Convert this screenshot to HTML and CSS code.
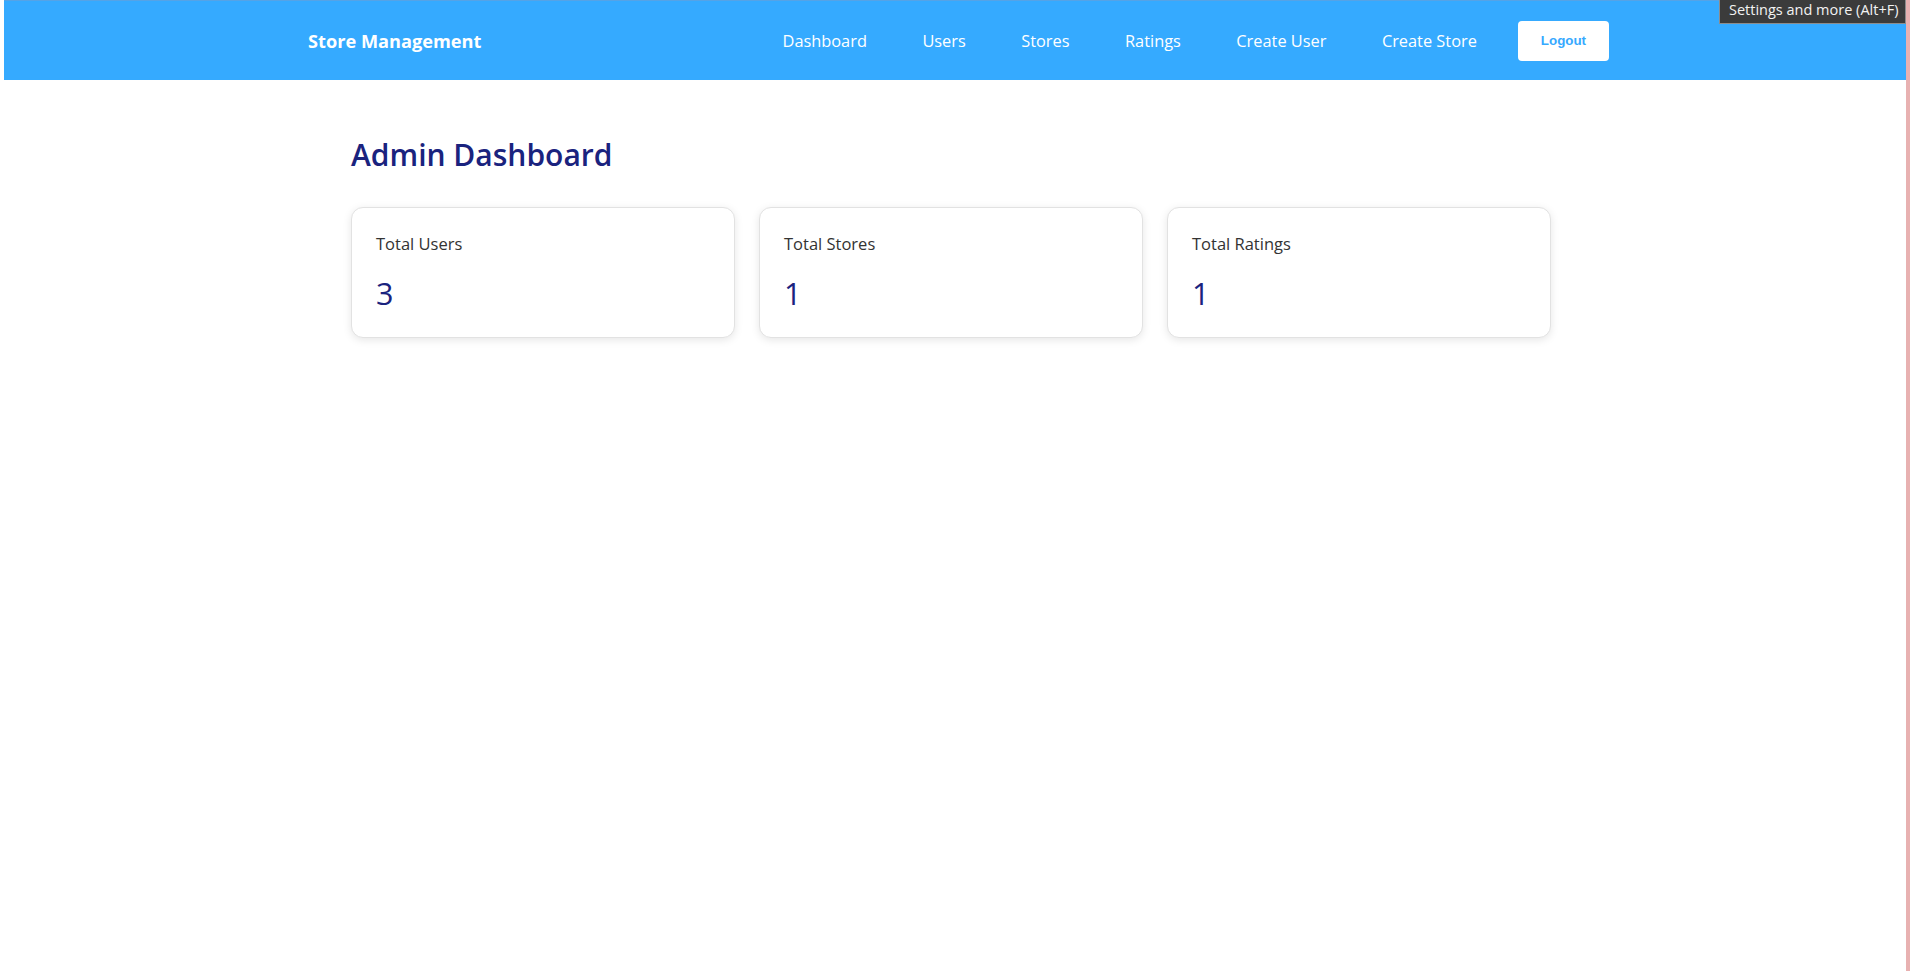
FILE: index.html
```html
<!DOCTYPE html>
<html lang="en">
<head>
<meta charset="utf-8">
<title>Store Management</title>
<link rel="stylesheet" href="styles.css">
</head>
<body>
<div class="app">
  <header class="navbar">
    <div class="brand">Store Management</div>
    <nav class="nav">
      <div class="nav-links">
        <a class="nav-link" href="#">Dashboard</a>
        <a class="nav-link" href="#">Users</a>
        <a class="nav-link" href="#">Stores</a>
        <a class="nav-link" href="#">Ratings</a>
        <a class="nav-link" href="#">Create User</a>
        <a class="nav-link" href="#">Create Store</a>
      </div>
      <button class="logout" type="button">Logout</button>
    </nav>
  </header>
  <main class="main">
    <h1 class="page-title">Admin Dashboard</h1>
    <section class="stats">
      <div class="stat-card">
        <h3 class="stat-label">Total Users</h3>
        <p class="stat-value">3</p>
      </div>
      <div class="stat-card">
        <h3 class="stat-label">Total Stores</h3>
        <p class="stat-value">1</p>
      </div>
      <div class="stat-card">
        <h3 class="stat-label">Total Ratings</h3>
        <p class="stat-value">1</p>
      </div>
    </section>
  </main>
  <div class="tooltip">Settings and more (Alt+F)</div>
</div>
</body>
</html>
```

FILE: styles.css
```css
* {
  box-sizing: border-box;
}

html, body {
  margin: 0;
  padding: 0;
  background: #ffffff;
  overflow: hidden;
}

body {
  font-family: "Open Sans", "Noto Sans", "DejaVu Sans", sans-serif;
}

.app {
  position: relative;
  margin-left: 4px;
  height: 100vh;
  border-right: 4px solid #e8b1b1;
  background: #ffffff;
}

.navbar {
  height: 80px;
  background: #35aaff;
  border-top: 1px solid #55a3e6;
  display: flex;
  align-items: center;
  justify-content: space-between;
  padding: 0 297px 0 304px;
}

.brand {
  color: #ffffff;
  font-weight: 700;
  font-size: 18.2px;
  line-height: 24px;
}

.nav {
  display: flex;
  align-items: center;
  gap: 41px;
}

.nav-links {
  display: flex;
  align-items: center;
  gap: 55.5px;
}

.nav-link {
  color: #ffffff;
  text-decoration: none;
  font-size: 16.35px;
  line-height: 24px;
}

.logout {
  background: #ffffff;
  color: #36a9ff;
  border: none;
  border-radius: 4px;
  font-family: "Liberation Sans", Arial, sans-serif;
  font-weight: 700;
  font-size: 13.33px;
  line-height: 16px;
  padding: 12px 23px;
  cursor: pointer;
}

.main {
  width: 1200px;
  margin-left: 347px;
  padding-top: 55px;
}

.page-title {
  margin: 0 0 32px;
  color: #1a237e;
  font-size: 30px;
  font-weight: 600;
  line-height: 40px;
}

.stats {
  display: grid;
  grid-template-columns: repeat(3, 1fr);
  gap: 24px;
}

.stat-card {
  background: #ffffff;
  border: 1px solid #e2e2e2;
  border-radius: 12px;
  box-shadow: 0 2px 8px rgba(0, 0, 0, 0.1);
  padding: 24px 24px 26px;
}

.stat-label {
  margin: 0 0 19px;
  color: #333333;
  font-size: 16.5px;
  font-weight: 500;
  line-height: 24px;
}

.stat-value {
  margin: 0;
  color: #1a237e;
  font-size: 30.5px;
  font-weight: 500;
  line-height: 36px;
}

.tooltip {
  position: absolute;
  top: 0;
  right: 0;
  width: 187px;
  height: 24px;
  background: #3b3b3b;
  border: 1px solid #8c8c8c;
  border-top: none;
  color: #f2f2f2;
  font-size: 14.5px;
  line-height: 20px;
  padding: 0 0 0 9px;
  white-space: nowrap;
}
```
